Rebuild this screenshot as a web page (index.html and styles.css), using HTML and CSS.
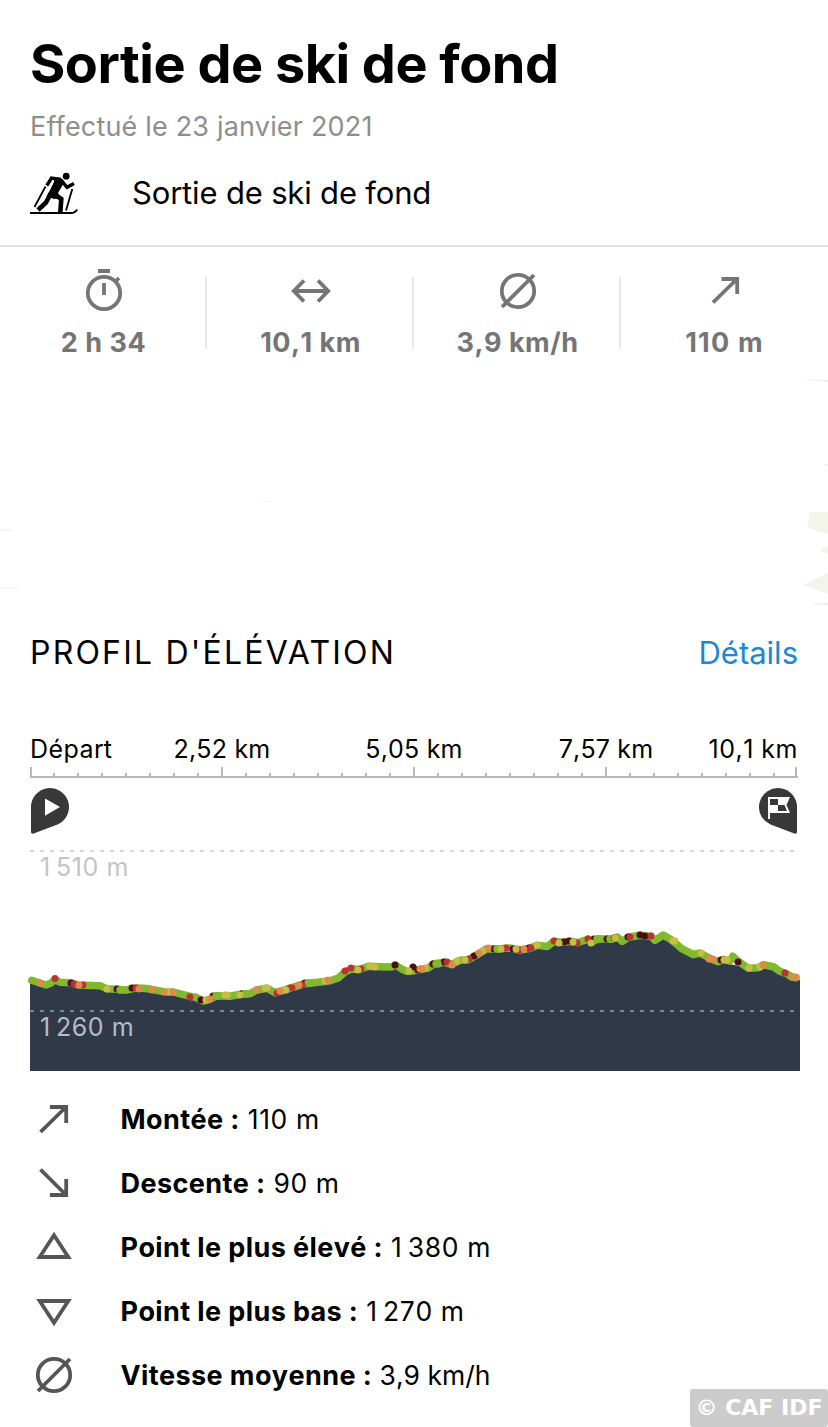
FILE: index.html
```html
<!DOCTYPE html>
<html lang="fr">
<head>
    <meta charset="UTF-8">
    <meta name="viewport" content="width=device-width, initial-scale=1.0">
    <title>Sortie de ski de fond</title>
    <link rel="stylesheet" href="styles.css">
</head>
<body>
    <header class="tour-header">
        <h1 class="title">Sortie de ski de fond</h1>
        <p class="date">Effectué le 23 janvier 2021</p>
        <div class="sport">
            <svg class="sport-icon" viewBox="0 0 50 44" width="50" height="44">
                <circle cx="36.2" cy="5.2" r="3.4"/>
                <path class="arm" d="M31 8.500L21.500 7L16.800 14.500M31 9L37 16.300L44 12.500"/>
                <path d="M24 6.500L31 7L34.500 11L28 22L31 27L24 28L17 25L24 11Z"/>
                <path class="leg" d="M21 22L16 31.500L8 39M23 22.500L31.300 28L30.300 41.500"/>
                <path class="pole" d="M15.500 15.500L4.500 36M42.300 18L36 39.500"/>
                <path class="ski" d="M0 42H41Q45 42 47.200 38.500"/>
            </svg>
            <span class="sport-name">Sortie de ski de fond</span>
        </div>
    </header>

    <section class="stats">
        <div class="stat">
            <svg class="icon" viewBox="0 0 44 44" width="44" height="44">
                <circle cx="22" cy="24" r="16.2"/>
                <path d="M16 2H28M22 14V26M33 13L37 9"/>
            </svg>
            <span>2 h 34</span>
        </div>
        <div class="stat">
            <svg class="icon" viewBox="0 0 44 44" width="44" height="44">
                <path d="M5 22H39M15 11.500L4.800 22L15 32.500M29 11.500L39.200 22L29 32.500"/>
            </svg>
            <span>10,1 km</span>
        </div>
        <div class="stat">
            <svg class="icon" viewBox="0 0 44 44" width="44" height="44">
                <circle cx="22" cy="22" r="16.2"/>
                <path d="M6 38L38 6"/>
            </svg>
            <span>3,9 km/h</span>
        </div>
        <div class="stat">
            <svg class="icon" viewBox="0 0 44 44" width="44" height="44">
                <path d="M10 33.500L34 10M18.500 10H34.200V25"/>
            </svg>
            <span class="wide">110 m</span>
        </div>
    </section>

    <!-- faded edges of the map -->
    <section class="map">
        <svg viewBox="0 370 828 240" width="828" height="240">
            <path fill="#eee" d="M800 379L828 380V382ZM822 465L828 464V466ZM814 604L828 603V605H814Z"/>
            <path fill="#f3f5ea" d="M810 512H828V534L807 528ZM820 550L828 546V554ZM803 585L828 573V594Z"/>
            <path fill="#f6f6f2" d="M0 529H13V531H0ZM0 587H18V589H0ZM260 501H272V502H260Z"/>
        </svg>
    </section>

    <section class="profile">
        <div class="profile-head">
            <h2>PROFIL D'ÉLÉVATION</h2>
            <a class="details">Détails</a>
        </div>

        <div class="scale">
            <span>Départ</span>
            <span>2,52 km</span>
            <span>5,05 km</span>
            <span>7,57 km</span>
            <span>10,1 km</span>
        </div>

        <svg class="ruler" viewBox="30 766 768 12" width="768" height="12">
            <path d="M30 777H798M31 767V777M222 767V777M414 767V777M606 767V777M796 767V777"/>
            <path d="M54 773v4m24-4v4m24-4v4m24-4v4m24-4v4m24-4v4m24-4v4M246 773v4m24-4v4m24-4v4m24-4v4m24-4v4m24-4v4m24-4v4M438 773v4m24-4v4m24-4v4m24-4v4m24-4v4m24-4v4m24-4v4M630 773v4m24-4v4m24-4v4m24-4v4m24-4v4m24-4v4m24-4v4"/>
        </svg>

        <div class="pins">
            <svg viewBox="0 0 38 46" width="38" height="46">
                <path fill="#383838" d="M0 19A19 19 0 1 1 26.500 36.500L2 45.800Q0 46 0 44Z"/>
                <path fill="#fff" d="M14 10.500L29 19L14 27.800Z"/>
            </svg>
            <svg viewBox="0 0 38 46" width="38" height="46">
                <path fill="#383838" d="M38 19A19 19 0 1 0 11.500 36.500L36 45.800Q38 46 38 44Z"/>
                <path fill="#fff" d="M9 9H31L27.500 17L31 25H11V31H9ZM11 11V17H19V11ZM19 17V23H28L25.500 17Z" fill-rule="evenodd"/>
            </svg>
        </div>

        <div class="chart">
            <svg viewBox="26 850 774 221" width="774" height="221">
                <path class="area" d="M30 1071V982L46 986L55 982L78 985L100 986L117 990L151 989L183 995L203 1002L217 996L242 994L267 989L275 993L305 984L330 981L345 972L368 967L392 967L407 971L428 968L445 963L468 960L487 949L530 948L547 947L562 942L612 940L640 936L655 940L663 935L682 949L711 960L748 968L773 967L800 980V1071Z"/>
                <path class="limit" d="M30 851H798"/>
                <path class="limit inside" d="M30 1011H798"/>
                <polyline class="grade green" points="31.700,980.300 40,983 46,985 50.700,983.300 55,979.500 60,982.300 70.700,982.700 78.300,985 100,985.700 106.700,988.700 116.700,989.300 126.700,990 135,988 143.300,988.300 151.700,989.300 163.300,991.700 173.300,992 183.300,994.700 191.700,996.700 195,997 203.300,1001 210,999.300 216.700,995.700 230,996.300 241.700,994 250,993.700 256.700,990 267.300,988.300 275,992.700 283.300,990.300 291.700,987.700 305,983.700 320,982 330,980.700 338.300,978 345,971.700 351.700,969 360,969.300 368.300,966.300 380,966.700 391.700,967 395.700,965 401.700,969 406.700,971.300 411.700,971 418.300,969.700 428.300,968 434,963.700 445,962.300 451.700,964.300 460,960.300 468.300,959.700 476.700,955 486.700,948.700 496.700,949 510,948 520,950 530,948.300 537.300,945.300 547.300,946.500 554,941.300 561.700,942.300 571.700,941.300 577.300,942.700 588.300,939 591.700,942.300 598.300,938.700 611.700,939.300 617.300,937 622.300,941.500 628.300,937.300 640,935.300 651,936.300 655,940.300 663.300,935 671.700,940 681.700,948.700 693.300,954.700 700,953 711.700,959.300 718.300,961.700 723.300,959.300 730,961 732.700,956.300 738.300,961.300 748.300,968.300 758.300,967.700 763.300,964.700 773.300,966.700 780,971.300 786.700,973.700 791.700,977 796,977.700"/>
                <path class="grade dark" d="M71 983h0M117 989h0M132 988h0M201 1000h0M213 996h0M242 994h0M305 983h0M395 965h0M413 967h0M418 970h0M433 964h0M444 962h0M474 956h0M494 949h0M513 949h0M529 948h0M564 942h0M569 941h0M594 939h0M607 939h0M628 937h0M640 935h0M645 936h0M721 960h0M738 962h0"/>
                <path class="grade green" d="M120 990h3M216 996h2M245 994h2M308 983h3M436 964h2M497 949h2M597 939h2M610 939h2"/>
                <path class="grade red" d="M55 978.500h0M74 984h0M83 985h0M136 988h0M190 997h0M277 993h0M290 988h2M302 985h0M345 971h0M351 968h0M361 969h0M447 962h0M469 959h0M506 948h0M519 950h0M531 948h0M554 941h0M577 943h0M588 939h0M614 938h0M630 937h0M651 936h0M785 973h0"/>
                <path class="grade yellow" d="M107 989h0M169 992h0M206 1000h0M225 995h2M240 995h0M265 988h2M283 990h3M325 981h0M358 970h0M370 966h0M375 967h0M409 971h0M425 968h0M457 961h0M465 960h0M483 951h0M501 949h0M516 949h0M537 945h0M559 943h0M573 942h0M591 943h0M615 938h0M673 941h2M701 953h0M724 960h3M749 968h0M760 967h0"/>
                <path class="grade orange" d="M40 983h0M79 985h0M139 989h0M152 990h0M164 992h0M173 992h0M210 999h0M256 990h0M280 991h0M299 985h0M328 980h0M420 969h2M452 965h0M479 953h0M488 948h0M524 949h0M709 959h4M763 965h0M793 977h3"/>
            </svg>
            <span class="altitude high">1&#8201;510 m</span>
            <span class="altitude low">1&#8201;260 m</span>
        </div>
    </section>

    <ul class="facts">
        <li>
            <svg class="icon" viewBox="0 0 44 44" width="44" height="44"><path d="M8.500 35L34 10M18 10H34.200V26"/></svg>
            <span class="fact"><b>Montée :</b> 110 m</span>
        </li>
        <li>
            <svg class="icon" viewBox="0 0 44 44" width="44" height="44"><path d="M8.500 8.500L34 34M18 34H34.200V18"/></svg>
            <span class="fact"><b>Descente :</b> 90 m</span>
        </li>
        <li>
            <svg class="icon" viewBox="0 0 44 44" width="44" height="44"><path d="M22 10.300L36.300 32H7.700Z"/></svg>
            <span class="fact"><b>Point le plus élevé :</b> 1&#8201;380 m</span>
        </li>
        <li>
            <svg class="icon" viewBox="0 0 44 44" width="44" height="44"><path d="M22 33.700L36.300 12H7.700Z"/></svg>
            <span class="fact"><b>Point le plus bas :</b> 1&#8201;270 m</span>
        </li>
        <li>
            <svg class="icon" viewBox="0 0 44 44" width="44" height="44"><circle cx="22" cy="22" r="16.2"/><path d="M6 38L38 6"/></svg>
            <span class="fact speed"><b>Vitesse moyenne :</b> 3,9 km/h</span>
        </li>
    </ul>

    <div class="credit">© CAF IDF</div>
</body>
</html>
```
FILE: styles.css
```css
*, *::before, *::after {
    box-sizing: border-box;
}

body {
    margin: 0;
    width: 828px;
    height: 1427px;
    position: relative;
    overflow: hidden;
    background: #fff;
    color: #000;
    font-family: 'Inter', 'Liberation Sans', sans-serif;
}

h1, h2, p, ul {
    margin: 0;
    padding: 0;
}

svg {
    display: block;
    flex: none;
}

.tour-header {
    height: 247px;
    padding: 32px 30px 0;
    border-bottom: 2px solid #e2e2e2;
}

.title {
    font-size: 54px;
    line-height: 64px;
    font-weight: 700;
    letter-spacing: -0.5px;
    white-space: nowrap;
}

.date {
    margin-top: 13px;
    font-size: 27px;
    line-height: 36px;
    letter-spacing: 0.18px;
    color: #8e8e8e;
}

.sport {
    display: flex;
    align-items: center;
    gap: 52px;
    height: 44px;
    margin-top: 26px;
}

.sport-name {
    font-size: 31px;
    line-height: 44px;
    letter-spacing: -0.17px;
}

.arm, .leg, .pole, .ski {
    fill: none;
    stroke: #000;
    stroke-width: 1.8;
}

.arm {
    stroke-width: 3.4;
}

.leg {
    stroke-width: 4.6;
}

.icon {
    fill: none;
    stroke: #757575;
    stroke-width: 3.8;
}

.stats {
    display: flex;
    height: 123px;
    padding-top: 22px;
}

.stat {
    width: 207px;
    display: flex;
    flex-direction: column;
    align-items: center;
    gap: 12px;
    font-size: 27px;
    line-height: 36px;
    font-weight: 700;
    font-kerning: none;
    letter-spacing: 0.5px;
    color: #757575;
    background: linear-gradient(#e8e8e8, #e8e8e8) right 8px / 2px 72px no-repeat;
}

.stat:last-child {
    background: none;
}

.wide {
    letter-spacing: 1.2px;
}

.map {
    height: 240px;
}

.profile {
    padding: 21px 30px 0;
}

.profile-head {
    display: flex;
    justify-content: space-between;
    line-height: 44px;
}

.profile-head h2 {
    font-size: 32px;
    font-weight: 400;
    letter-spacing: 2.2px;
}

.details {
    font-size: 31px;
    color: #1b87d9;
}

.scale {
    display: grid;
    grid-template-columns: 96px repeat(3, 192px) 96px;
    margin-top: 57px;
    font-size: 25px;
    line-height: 34px;
    text-align: center;
    white-space: nowrap;
    font-kerning: none;
    letter-spacing: 0.2px;
}

.scale > :first-child {
    text-align: left;
    letter-spacing: 0.5px;
}

.scale > :last-child {
    text-align: right;
    letter-spacing: 0.5px;
}

.ruler {
    fill: none;
    stroke: #b8b8b8;
    stroke-width: 2;
}

.pins {
    display: flex;
    justify-content: space-between;
    padding: 10px 1px 0;
}

.chart {
    position: relative;
    margin: 16px 0 0 -4px;
}

.area {
    fill: #303948;
}

.limit {
    stroke: #d8d8d8;
    stroke-width: 2;
    stroke-dasharray: 4 6;
}

.limit.inside {
    stroke: #7b8493;
}

.grade {
    fill: none;
    stroke-width: 7;
    stroke-linecap: round;
    stroke-linejoin: round;
}

.green {
    stroke: #82b82d;
    stroke-width: 7.5;
}

.yellow {
    stroke: #c6bd46;
}

.orange {
    stroke: #df8a4c;
}

.red {
    stroke: #b83238;
}

.dark {
    stroke: #4a1114;
}

.altitude {
    position: absolute;
    left: 14px;
    font-size: 25px;
    line-height: 30px;
    font-kerning: none;
    letter-spacing: 0.6px;
}

.high {
    top: 2px;
    color: #c4c4c4;
}

.low {
    top: 162px;
    color: #b5bcc8;
}

.facts {
    list-style: none;
    padding: 16px 32px 0;
}

.facts li {
    display: flex;
    align-items: center;
    gap: 44.5px;
    height: 64px;
    font-size: 26.5px;
    line-height: 36px;
    font-kerning: none;
}

.facts .icon {
    stroke: #555;
}

.fact {
    padding-top: 1px;
    letter-spacing: 0.6px;
}

.speed {
    letter-spacing: 0;
}

.facts b {
    font-size: 27px;
    font-weight: 700;
    letter-spacing: 0.4px;
}

.credit {
    position: absolute;
    right: 0;
    bottom: 0;
    width: 138px;
    height: 38px;
    border-radius: 3px;
    background: #ccc;
    color: #fff;
    font: bold 22px/38px 'DejaVu Sans', sans-serif;
    text-align: center;
    white-space: nowrap;
}
```
